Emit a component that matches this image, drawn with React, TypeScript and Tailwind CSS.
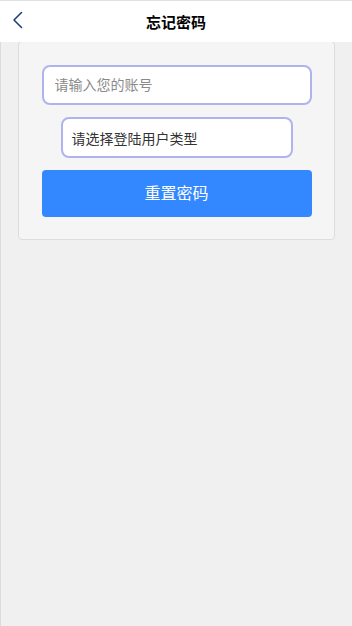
import React from 'react';

const BackIcon: React.FC = () => (
  <svg width="12" height="18" viewBox="0 0 12 18" fill="none">
    <path d="M9.5 1.5 L2 9 L9.5 16.5" stroke="#1d3a78" strokeWidth="1.5" strokeLinecap="round" strokeLinejoin="round" />
  </svg>
);

const App: React.FC = () => {
  return (
    <div className="w-[352px] h-[626px] flex flex-col bg-[#f0f0f0] overflow-hidden" style={{ fontFamily: '"Noto Sans CJK SC", "Liberation Sans", sans-serif' }}>
      {/* Header */}
      <div className="relative h-[42px] shrink-0 bg-white border-t border-[#e2e2e2] flex items-center justify-center">
        <button className="absolute left-[12px] top-[10px] p-0">
          <BackIcon />
        </button>
        <span className="text-[15px] font-bold text-black leading-none">忘记密码</span>
      </div>

      {/* Body */}
      <div className="flex-1 border-l border-[#dcdcdc] pl-[17px] pr-[17px]">
        <div className="-mt-px h-[199px] bg-[#f5f5f5] border border-[#dddddd] rounded-[4px] pt-[23px] px-[23px] flex flex-col items-center">
          <input
            placeholder="请输入您的账号"
            className="w-[270px] h-[40px] bg-white border-2 border-[#b0b4ee] rounded-[8px] px-[11px] pb-[2px] text-[14px] text-[#333] placeholder:text-[#8a8a8a] outline-none"
          />
          <div className="mt-[12px] w-[232px] h-[41px] bg-white border-2 border-[#b0b4ee] rounded-[8px] px-[9px] flex items-center text-[14px] text-[#333]">
            <span className="mt-px">请选择登陆用户类型</span>
          </div>
          <button className="mt-[12px] w-[270px] h-[47px] bg-[#3388ff] rounded-[4px] text-white text-[16px] pb-[3px]">
            重置密码
          </button>
        </div>
      </div>
    </div>
  );
};

export default App;
